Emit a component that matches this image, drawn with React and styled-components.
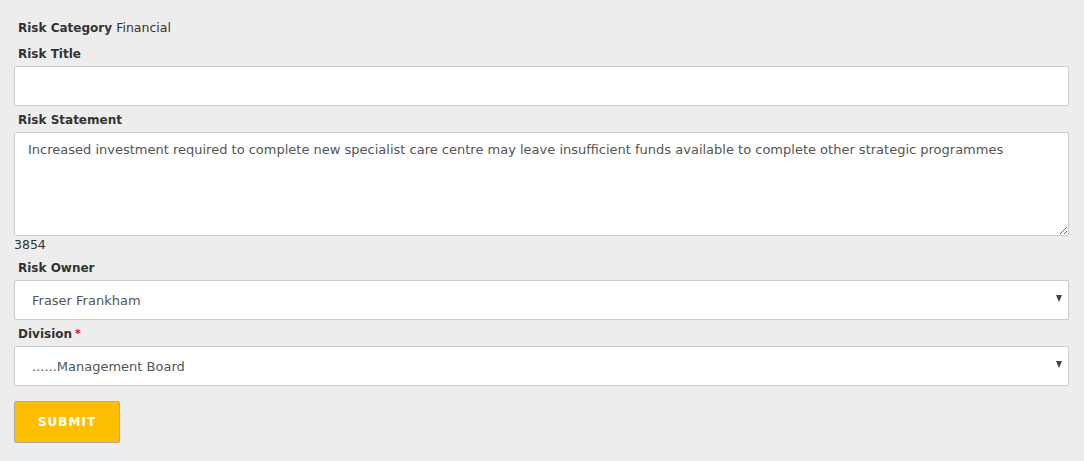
import React from 'react';
import styled, { createGlobalStyle } from 'styled-components';

const GlobalStyle = createGlobalStyle`
  html, body {
    margin: 0;
    padding: 0;
    background: #ededed;
  }
  body {
    font-family: 'DejaVu Sans', 'Open Sans', sans-serif;
    color: #333;
  }
`;

const Form = styled.form`
  padding: 18px 15px 18px 14px;
  display: flex;
  flex-direction: column;
`;

const Label = styled.label`
  display: block;
  font-size: 12px;
  font-weight: bold;
  color: #333;
  padding-left: 4px;
  line-height: 20px;
  margin-bottom: ${(p) => (p.head ? 6 : 2)}px;
`;

const Value = styled.span`
  font-weight: normal;
  font-size: 12.5px;
`;

const Required = styled.span`
  color: #e00;
  margin-left: 3px;
  font-size: 11px;
  vertical-align: top;
`;

const Field = styled.div`
  margin-bottom: ${(p) => (p.gap === undefined ? 4 : p.gap)}px;
`;

const Input = styled.input`
  box-sizing: border-box;
  display: block;
  width: 100%;
  height: 40px;
  border: 1px solid #ccc;
  border-radius: 2px;
  background: #fff;
  font: inherit;
`;

const TextArea = styled.textarea`
  box-sizing: border-box;
  display: block;
  width: 100%;
  height: 104px;
  border: 1px solid #ccc;
  border-radius: 2px;
  background: #fff;
  padding: 8px 13px;
  font-family: inherit;
  font-size: 13px;
  line-height: 18px;
  color: #555;
  resize: vertical;
`;

const Counter = styled.div`
  font-size: 12.5px;
  color: #333;
  line-height: 17px;
  margin-bottom: 5px;
`;

const SelectWrap = styled.div`
  position: relative;
`;

const Select = styled.select`
  box-sizing: border-box;
  display: block;
  width: 100%;
  height: 40px;
  border: 1px solid #ccc;
  border-radius: 2px;
  background: #fff;
  padding: 0 17px;
  font-family: inherit;
  font-size: 13px;
  color: #555;
  appearance: none;
`;

const Caret = styled.span`
  position: absolute;
  right: 7px;
  top: 15px;
  width: 0;
  height: 0;
  border-left: 3.5px solid transparent;
  border-right: 3.5px solid transparent;
  border-top: 7px solid #444;
  pointer-events: none;
`;

const Submit = styled.button`
  align-self: flex-start;
  margin-top: 11px;
  width: 106px;
  height: 42px;
  background: #ffbf00;
  border: 1px solid #aaa;
  border-radius: 2px;
  color: #fff;
  font-family: inherit;
  font-size: 12px;
  font-weight: bold;
  letter-spacing: 1px;
  text-transform: uppercase;
`;

export default function App() {
  return (
    <>
      <GlobalStyle />
      <Form onSubmit={(e) => e.preventDefault()}>
        <Label head>
          Risk Category <Value>Financial</Value>
        </Label>
        <Field>
          <Label>Risk Title</Label>
          <Input type="text" />
        </Field>
        <Field gap={0}>
          <Label>Risk Statement</Label>
          <TextArea defaultValue="Increased investment required to complete new specialist care centre may leave insufficient funds available to complete other strategic programmes" />
        </Field>
        <Counter>3854</Counter>
        <Field>
          <Label>Risk Owner</Label>
          <SelectWrap>
            <Select defaultValue="ff">
              <option value="ff">Fraser Frankham</option>
            </Select>
            <Caret />
          </SelectWrap>
        </Field>
        <Field>
          <Label>
            Division<Required>*</Required>
          </Label>
          <SelectWrap>
            <Select defaultValue="mb">
              <option value="mb">......Management Board</option>
            </Select>
            <Caret />
          </SelectWrap>
        </Field>
        <Submit type="submit">Submit</Submit>
      </Form>
    </>
  );
}
